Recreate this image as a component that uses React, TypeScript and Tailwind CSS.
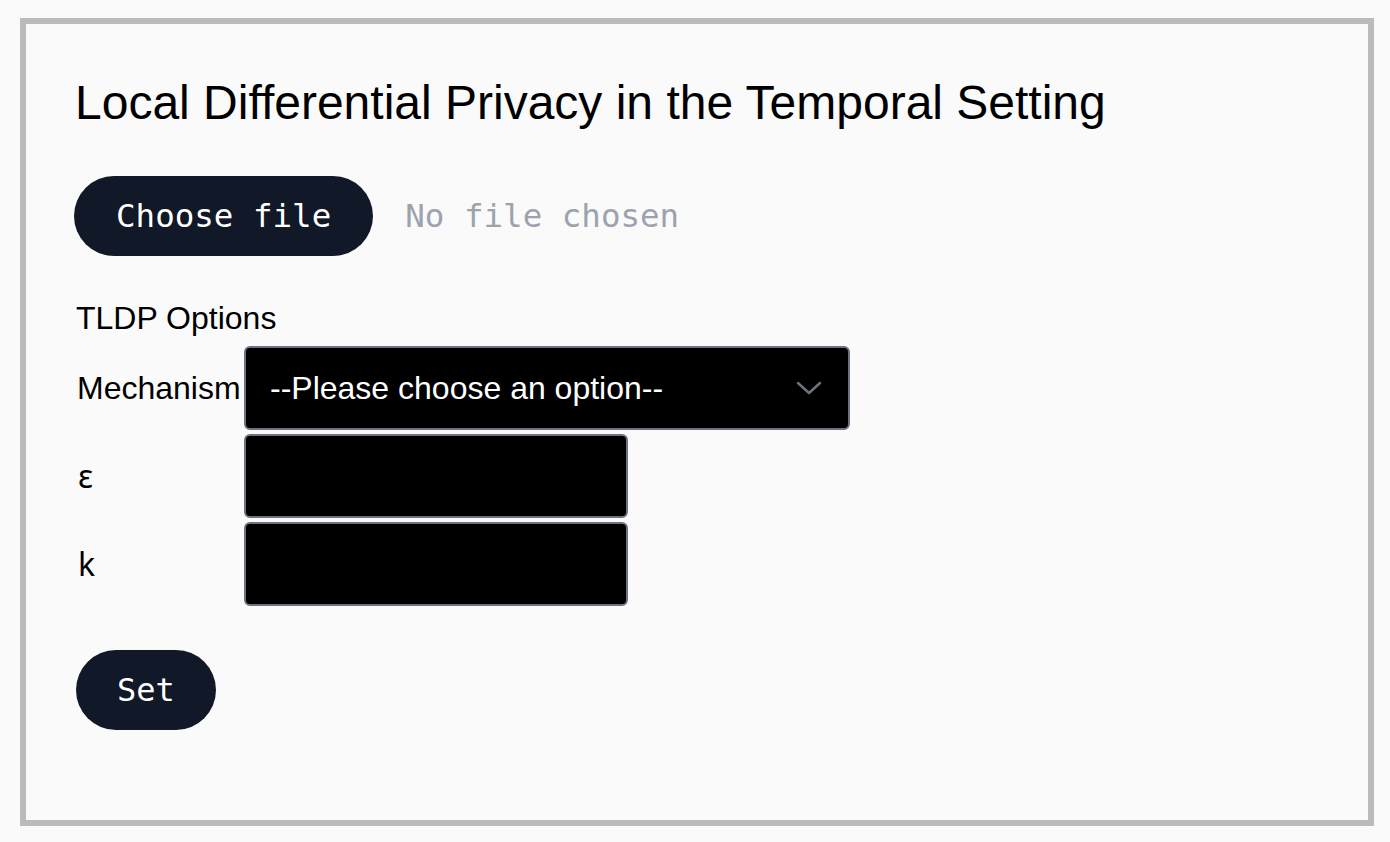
import { useState } from 'react';

// 옵션 행: 라벨 + 입력칸
function OptionRow({ label, children, symbol }: { label: string; children: React.ReactNode; symbol?: boolean }) {
  return (
    <>
      <div
        className={
          symbol
            ? "flex items-center pl-[2px] text-[32px] font-['Noto_Sans',sans-serif] text-black"
            : "flex items-center pl-[1px] text-[32px] font-['Liberation_Sans',Arial,sans-serif] text-black"
        }
      >
        {label}
      </div>
      <div className="flex items-center">{children}</div>
    </>
  );
}

export default function App() {
  const [mechanism, setMechanism] = useState('');

  return (
    <div className="min-h-[842px] bg-[#fafafa] pt-[18px] pl-[20px] pr-[16px] pb-[16px]">
      <div className="border-[6px] border-[#bbbbbb] bg-[#fafafa] pl-[50px] pt-[51px] pb-[90px] font-['Liberation_Sans',Arial,sans-serif]">
        <h1 className="-ml-[1px] text-[48px] leading-[55px] text-black">
          Local Differential Privacy in the Temporal Setting
        </h1>

        {/* 파일 선택 */}
        <div className="mt-[46px] flex items-center -ml-[2px]">
          <label className="flex h-[80px] cursor-pointer items-center rounded-full bg-[#111827] px-[42px] font-['DejaVu_Sans_Mono',monospace] text-[32.5px] text-white">
            Choose file
            <input type="file" className="hidden" />
          </label>
          <span className="ml-[32px] font-['DejaVu_Sans_Mono',monospace] text-[32.5px] text-[#9ca3af]">
            No file chosen
          </span>
        </div>

        <div className="mt-[44px] text-[32px] leading-[37px] text-black">TLDP Options</div>

        <div className="mt-[9px] grid grid-cols-[164px_auto] gap-x-[4px] gap-y-[4px]">
          <OptionRow label="Mechanism">
            <div className="relative">
              <select
                value={mechanism}
                onChange={(e) => setMechanism(e.target.value)}
                className="h-[84px] w-[606px] appearance-none rounded-[6px] border-2 border-[#6b7280] bg-black pl-[24px] text-[32px] text-white outline-none"
              >
                <option value="">--Please choose an option--</option>
                <option value="pegasus">Pegasus</option>
                <option value="ldp">LDP</option>
              </select>
              <svg
                className="pointer-events-none absolute right-[28px] top-[34px]"
                width="26"
                height="16"
                viewBox="0 0 26 16"
                fill="none"
              >
                <path d="M2 3 L13 13 L24 3" stroke="#6b7280" strokeWidth="2.5" strokeLinecap="round" strokeLinejoin="round" />
              </svg>
            </div>
          </OptionRow>
          <OptionRow label="ε" symbol>
            <input type="text" className="h-[84px] w-[384px] rounded-[6px] border-2 border-[#6b7280] bg-black text-[32px] text-white outline-none" />
          </OptionRow>
          <OptionRow label="k" symbol>
            <input type="text" className="h-[84px] w-[384px] rounded-[6px] border-2 border-[#6b7280] bg-black text-[32px] text-white outline-none" />
          </OptionRow>
        </div>

        <button className="mt-[44px] flex h-[80px] items-center rounded-full bg-[#111827] px-[41px] font-['DejaVu_Sans_Mono',monospace] text-[32px] text-white">
          Set
        </button>
      </div>
    </div>
  );
}
